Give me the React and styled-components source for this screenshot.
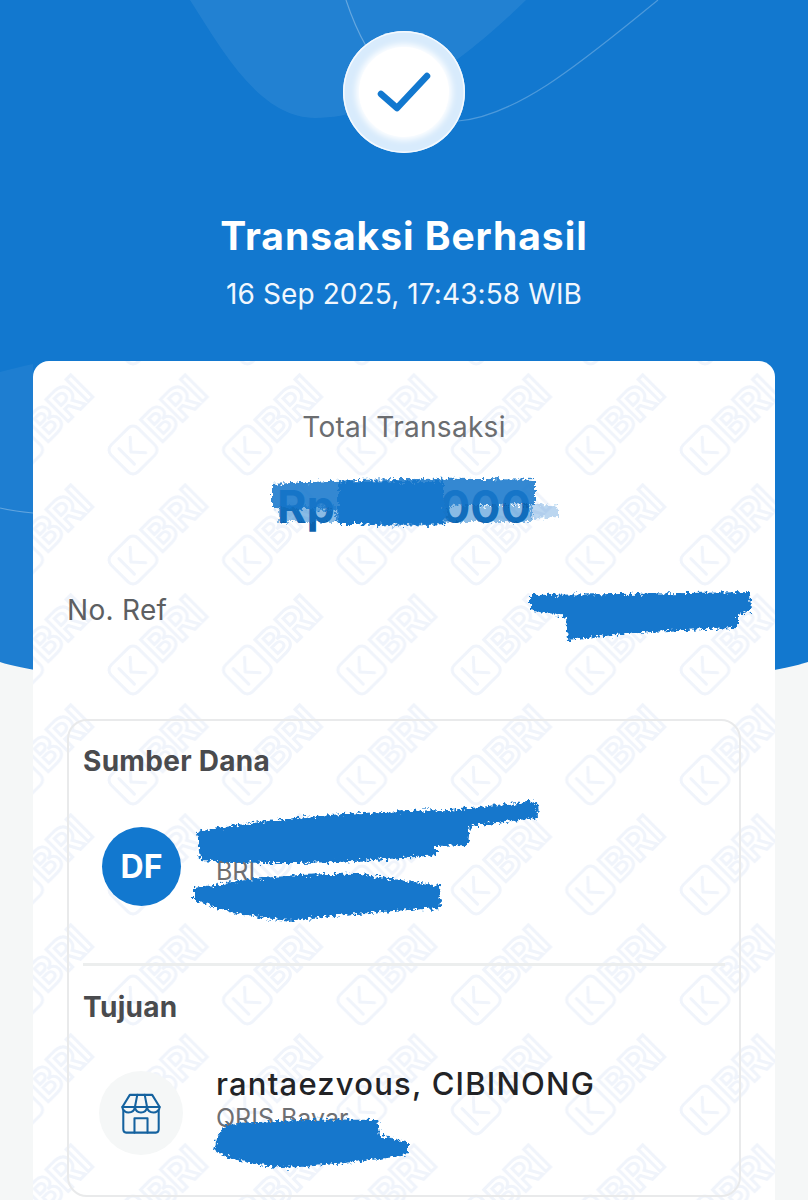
import React from "react";
import styled, { createGlobalStyle } from "styled-components";

const GlobalStyle = createGlobalStyle`
  html, body { margin: 0; padding: 0; background: #f5f7f7; }
  * { box-sizing: border-box; }
`;

function HeaderArt() {
  return (
    <HeaderSvg viewBox="0 0 808 680" preserveAspectRatio="none">
      <path d="M0 0H808V662C690 700 120 700 0 662Z" fill="#1278cf" />
      <path d="M190 0C225 55 260 117 315 118C390 118 470 55 526 0Z" fill="#ffffff" fillOpacity="0.07" />
      <path d="M346 0C352 18 358 32 366 46" fill="none" stroke="#ffffff" strokeOpacity="0.3" strokeWidth="1.2" />
      <path d="M458 121C520 116 590 55 658 0" fill="none" stroke="#ffffff" strokeOpacity="0.25" strokeWidth="1.2" />
      <path d="M0 372C12 369 22 366 33 364L33 672L0 662Z" fill="#ffffff" fillOpacity="0.05" />
      <path d="M0 508C12 511 22 512 33 513" fill="none" stroke="#ffffff" strokeOpacity="0.3" strokeWidth="1.2" />
    </HeaderSvg>
  );
}

function Watermark() {
  return (
    <WatermarkSvg width="100%" height="100%">
      <defs>
        <pattern id="bri-mark" width="114.4" height="110" patternUnits="userSpaceOnUse" x="68" y="11">
          <g transform="translate(32 78) rotate(-45)" fill="none" stroke="#f0f4fb" strokeWidth="3">
            <rect x="-19" y="-19" width="38" height="38" rx="7" />
            <path d="M-9 -11V11M7 -11L-3 0L7 11" strokeLinejoin="round" strokeLinecap="round" />
            <text x="24" y="15" fontFamily="Inter, sans-serif" fontWeight="700" fontSize="43">BRI</text>
          </g>
        </pattern>
      </defs>
      <rect width="100%" height="100%" fill="url(#bri-mark)" />
    </WatermarkSvg>
  );
}

// brush strokes that hide private details
function Scribble({ strokes }) {
  return (
    <ScribbleSvg viewBox="0 0 808 1200">
      <defs>
        <filter id="rough" x="-5%" y="-30%" width="110%" height="160%">
          <feTurbulence type="fractalNoise" baseFrequency="0.3" numOctaves="3" seed="4" />
          <feDisplacementMap in="SourceGraphic" scale="9" xChannelSelector="R" yChannelSelector="G" />
          <feGaussianBlur stdDeviation="0.6" />
        </filter>
      </defs>
      <g filter="url(#rough)" fill="#1677cc">
        {strokes.map((s) => (
          <path key={s.d} d={s.d} fillOpacity={s.o || 1} />
        ))}
      </g>
    </ScribbleSvg>
  );
}

const strokes = [
  { d: "M272 484Q400 476 535 480L535 504L448 506L446 524Q390 528 336 522L336 510L272 508Z", o: 0.88 },
  { d: "M338 482H444V524H338Z" },
  { d: "M278 506H336V522H278ZM446 506H532V522H446Z", o: 0.5 },
  { d: "M530 503L558 507L558 517L530 518Z", o: 0.3 },
  { d: "M530 595Q640 594 750 592L751 612L738 614L738 628Q650 630 568 640L566 617L530 610Z" },
  { d: "M197 832Q300 812 450 810L537 801L538 818L470 826L468 845L436 846L436 855Q300 868 200 860Z" },
  { d: "M194 888Q280 872 360 874L440 886L441 908Q340 914 290 921Q230 915 194 900Z" },
  { d: "M226 1124Q300 1118 378 1120L380 1135L408 1142L408 1155Q330 1166 282 1168Q230 1162 214 1150L218 1135Z" },
];

export default function App() {
  return (
    <>
      <GlobalStyle />
      <Page>
        <HeaderArt />
        <Hero>
          <Badge>
            <BadgeInner>
              <svg width="58" height="46" viewBox="0 0 58 46" fill="none">
                <path d="M6 25L22 39L52 7" stroke="#1278cf" strokeWidth="6.5" strokeLinecap="round" strokeLinejoin="round" />
              </svg>
            </BadgeInner>
          </Badge>
          <Title>Transaksi Berhasil</Title>
          <DateText>16 Sep 2025, 17:43:58 WIB</DateText>
        </Hero>
        <Card>
          <Watermark />
          <CardBody>
            <TotalLabel>Total Transaksi</TotalLabel>
            <Amount>
              <span>Rp</span>
              <span>000</span>
            </Amount>
            <RefRow>No. Ref</RefRow>
            <DetailBox>
              <SectionTitle>Sumber Dana</SectionTitle>
              <Party>
                <Avatar>DF</Avatar>
                <PartyText>
                  <PartyName />
                  <PartySub>BRI</PartySub>
                  <PartySub />
                </PartyText>
              </Party>
              <Divider />
              <SectionTitle $tight>Tujuan</SectionTitle>
              <Party $target>
                <StoreCircle>
                  <svg width="40" height="41" viewBox="0 0 42 44" fill="none" stroke="#14629f" strokeWidth="2.2" strokeLinejoin="round" strokeLinecap="round">
                    <path d="M9 2H33L41 15C41 19 37 21 34.5 21C31 21 28 19 27.5 15C27 19 24 21 21 21C18 21 15 19 14.5 15C14 19 11 21 7.5 21C5 21 1 19 1 15Z" />
                    <path d="M1 15H41M14.5 15L17 2M27.5 15L25 2" />
                    <path d="M2 19V39C2 41.5 3 42.5 5 42.5H37C39 42.5 40 41.5 40 39V19" />
                    <path d="M14 42.5V27H28V42.5" />
                  </svg>
                </StoreCircle>
                <PartyText>
                  <PartyName>rantaezvous, CIBINONG</PartyName>
                  <PartySub>QRIS Bayar</PartySub>
                  <PartySub />
                </PartyText>
              </Party>
            </DetailBox>
          </CardBody>
        </Card>
        <Scribble strokes={strokes} />
      </Page>
    </>
  );
}

const Page = styled.div`
  position: relative;
  width: 808px;
  height: 1200px;
  overflow: hidden;
  background: #f5f7f7;
  font-family: Inter, "Liberation Sans", sans-serif;
`;

const HeaderSvg = styled.svg`
  position: absolute;
  top: 0;
  left: 0;
  width: 808px;
  height: 680px;
`;

const Hero = styled.div`
  position: relative;
  display: flex;
  flex-direction: column;
  align-items: center;
  padding-top: 31px;
  height: 361px;
  color: #fff;
`;

const Badge = styled.div`
  width: 122px;
  height: 122px;
  border-radius: 50%;
  background: #d8ebfc;
  display: flex;
  align-items: center;
  justify-content: center;
  box-shadow: inset 0 0 0 1.5px #f4f9fe;
`;

const BadgeInner = styled.div`
  width: 90px;
  height: 90px;
  border-radius: 50%;
  background: #fff;
  box-shadow: 0 0 6px 3px #fff;
  display: flex;
  align-items: center;
  justify-content: center;
`;

const Title = styled.h1`
  margin: 57px 0 0;
  font-size: 39px;
  line-height: 52px;
  font-weight: 700;
  letter-spacing: 0.95px;
`;

const DateText = styled.div`
  margin-top: 14px;
  font-size: 28px;
  line-height: 36px;
  letter-spacing: 0.1px;
  color: #f1f7fd;
`;

const Card = styled.div`
  position: relative;
  width: 742px;
  height: 839px;
  margin-left: 33px;
  background: #fff;
  border-radius: 16px 16px 0 0;
  overflow: hidden;
`;

const WatermarkSvg = styled.svg`
  position: absolute;
  top: 0;
  left: 0;
  filter: blur(0.5px);
`;

const ScribbleSvg = styled.svg`
  position: absolute;
  top: 0;
  left: 0;
  width: 808px;
  height: 1200px;
  pointer-events: none;
`;

const CardBody = styled.div`
  position: relative;
  display: flex;
  flex-direction: column;
  padding: 49px 34px 0;
`;

const TotalLabel = styled.div`
  text-align: center;
  font-size: 28px;
  line-height: 34px;
  letter-spacing: 0.3px;
  color: #6b6d70;
`;

const Amount = styled.div`
  margin-top: 37px;
  display: flex;
  justify-content: center;
  gap: 105px;
  font-size: 45px;
  line-height: 52px;
  font-weight: 700;
  color: #0d62ad;
`;

const RefRow = styled.div`
  margin-top: 60px;
  font-size: 28px;
  line-height: 34px;
  letter-spacing: 0.3px;
  color: #5d5f62;
`;

const DetailBox = styled.div`
  margin-top: 92px;
  height: 478px;
  border: 2px solid #e9eaeb;
  border-radius: 20px;
  padding: 22px 14px 0;
`;

const SectionTitle = styled.div`
  font-size: 28px;
  line-height: 36px;
  font-weight: 700;
  letter-spacing: 0.3px;
  color: #4a4b4e;
  margin-top: ${(p) => (p.$tight ? "23px" : "0")};
`;

const Party = styled.div`
  display: flex;
  align-items: center;
  gap: ${(p) => (p.$target ? "33px" : "35px")};
  padding-left: ${(p) => (p.$target ? "16px" : "19px")};
  margin-top: ${(p) => (p.$target ? "41px" : "40px")};
`;

const Avatar = styled.div`
  width: 79px;
  height: 79px;
  border-radius: 50%;
  background: #1278cf;
  color: #fff;
  font-size: 32px;
  font-weight: 700;
  display: flex;
  align-items: center;
  justify-content: center;
`;

const StoreCircle = styled.div`
  width: 84px;
  height: 84px;
  border-radius: 50%;
  background: #f5f7f7;
  display: flex;
  align-items: center;
  justify-content: center;
`;

const PartyText = styled.div`
  display: flex;
  flex-direction: column;
`;

const PartyName = styled.div`
  font-size: 31px;
  line-height: 36px;
  font-weight: 500;
  letter-spacing: 1.2px;
  color: #222326;
  min-height: 36px;
  margin-bottom: 2px;
`;

const PartySub = styled.div`
  font-size: 25px;
  line-height: 28px;
  min-height: 28px;
  color: #6e6f72;
`;

const Divider = styled.div`
  margin-top: 50px;
  height: 3px;
  background: #eceeee;
`;
